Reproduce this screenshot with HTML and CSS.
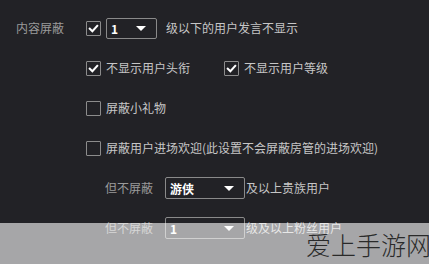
FILE: index.html
```html
<!DOCTYPE html>
<html lang="zh-CN">
<head>
<meta charset="utf-8">
<link rel="stylesheet" href="styles.css">
</head>
<body>
<div class="panel">
  <div class="label">内容屏蔽</div>
  <div class="options">
    <div class="row">
      <span class="cb checked"><svg viewBox="0 0 14 14"><polyline points="3,7.2 5.8,10 11,4.2"/></svg></span>
      <span class="select s-small"><span class="val">1</span><span class="arrow"></span></span>
      <span class="txt after-select">级以下的用户发言不显示</span>
    </div>
    <div class="row">
      <span class="cb checked"><svg viewBox="0 0 14 14"><polyline points="3,7.2 5.8,10 11,4.2"/></svg></span>
      <span class="txt">不显示用户头衔</span>
      <span class="cb checked second"><svg viewBox="0 0 14 14"><polyline points="3,7.2 5.8,10 11,4.2"/></svg></span>
      <span class="txt">不显示用户等级</span>
    </div>
    <div class="row">
      <span class="cb"></span>
      <span class="txt">屏蔽小礼物</span>
    </div>
    <div class="row">
      <span class="cb"></span>
      <span class="txt">屏蔽用户进场欢迎(此设置不会屏蔽房管的进场欢迎)</span>
    </div>
    <div class="row sub">
      <span class="sublabel">但不屏蔽</span>
      <span class="select s-wide"><span class="val">游侠</span><span class="arrow"></span></span>
      <span class="txt tight">及以上贵族用户</span>
    </div>
    <div class="row sub">
      <span class="sublabel">但不屏蔽</span>
      <span class="select s-wide"><span class="val">1</span><span class="arrow"></span></span>
      <span class="txt tight">级及以上粉丝用户</span>
    </div>
  </div>
</div>
<div class="banner"><span class="mark">爱上手游网</span></div>
</body>
</html>
```

FILE: styles.css
```css
html, body {
  margin: 0;
  padding: 0;
  background: #222226;
  width: 429px;
  height: 264px;
  overflow: hidden;
  font-family: "Noto Sans CJK SC", "Noto Sans", sans-serif;
  font-size: 12px;
  color: #c6c6c6;
}
.panel {
  display: flex;
  padding: 17px 0 0 16px;
}
.label {
  width: 70px;
  height: 22px;
  line-height: 22px;
  color: #9a9a9a;
}
.options {
  display: flex;
  flex-direction: column;
  gap: 18px;
}
.row {
  display: flex;
  align-items: center;
  height: 22px;
}
.cb {
  box-sizing: border-box;
  width: 15px;
  height: 15px;
  border: 1px solid #8c8c8c;
  border-radius: 1px;
  display: inline-flex;
  align-items: center;
  justify-content: center;
  margin-right: 5px;
}
.cb svg {
  width: 13px;
  height: 13px;
}
.cb polyline {
  fill: none;
  stroke: #ffffff;
  stroke-width: 2.2;
  stroke-linecap: square;
}
.cb.second {
  margin-left: 34px;
}
.txt {
  line-height: 22px;
  white-space: nowrap;
}
.after-select {
  margin-left: 9px;
}
.tight {
  margin-left: 1px;
}
.select {
  box-sizing: border-box;
  height: 22px;
  border: 1px solid #8a8a8a;
  border-radius: 2px;
  display: inline-flex;
  align-items: center;
  justify-content: space-between;
  padding: 0 10px 0 4px;
  color: #ffffff;
  font-weight: bold;
}
.s-small {
  width: 51px;
  height: 21px;
}
.s-wide {
  width: 80px;
}
.arrow {
  width: 0;
  height: 0;
  border-left: 5px solid transparent;
  border-right: 5px solid transparent;
  border-top: 5px solid #ffffff;
}
.sub {
  margin-left: 19px;
}
.sublabel {
  color: #9a9a9a;
  margin-right: 12px;
  line-height: 22px;
}
.banner {
  position: absolute;
  left: 0;
  top: 223px;
  width: 429px;
  height: 41px;
  background: rgba(255, 255, 255, 0.6);
  overflow: hidden;
}
.mark {
  position: absolute;
  right: -2px;
  top: 6px;
  font-size: 25px;
  line-height: 30px;
  color: #2a2a2a;
  font-weight: 300;
  letter-spacing: 0;
}
```
